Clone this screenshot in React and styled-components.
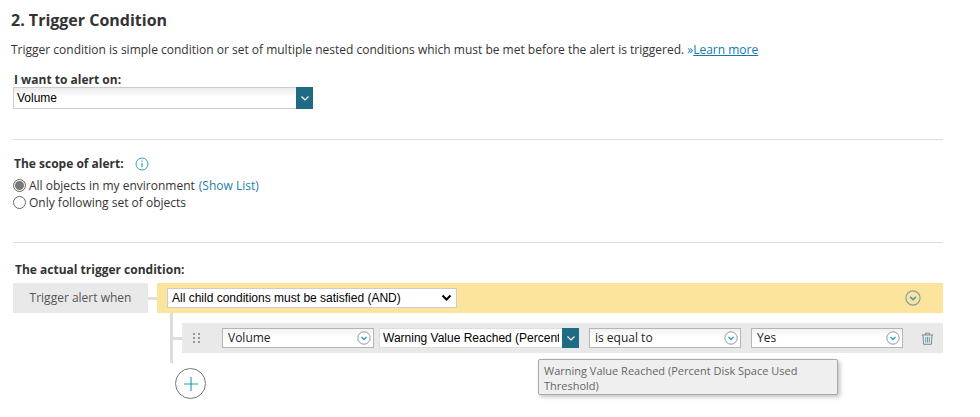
import React from "react";
import styled, { createGlobalStyle } from "styled-components";

const GlobalStyle = createGlobalStyle`
  html, body {
    margin: 0;
    padding: 0;
    background: #fff;
    font-family: "Open Sans", sans-serif;
    color: #333;
  }
`;

const Page = styled.div`
  width: 980px;
  height: 417px;
  box-sizing: border-box;
  padding: 10px 37px 0 13px;
  overflow: hidden;
`;

const Title = styled.h2`
  margin: 0 0 0 -2px;
  font-size: 16px;
  line-height: 20px;
  font-weight: 700;
  color: #333;
`;

const Intro = styled.p`
  margin: 12px 0 14px -2px;
  font-size: 12px;
  line-height: 16px;
  color: #333;
  white-space: nowrap;
  a {
    color: #0f7cab;
    text-decoration: underline;
  }
  span {
    color: #0f7cab;
  }
`;

const Label = styled.div`
  font-size: 12px;
  line-height: 16px;
  font-weight: 700;
  color: #333;
  display: flex;
  align-items: center;
  gap: 11px;
  margin-left: ${(p) => p.$indent || 0}px;
`;

const Section = styled.section`
  border-bottom: ${(p) => (p.$last ? "none" : "1px solid #ddd")};
  height: ${(p) => p.$height}px;
  box-sizing: border-box;
  padding-top: ${(p) => p.$top}px;
`;

const MainSelect = styled.div`
  display: flex;
  width: 300px;
  height: 22px;
  box-sizing: border-box;
  margin-top: -1px;
  border: 1px solid #ccc;
  border-right: none;
  background: linear-gradient(#ececec, #fff 45%);
  font-family: "Liberation Sans", sans-serif;
  font-size: 12px;
  line-height: 20px;
  color: #000;
  span {
    flex: 1;
    padding-left: 3px;
  }
`;

const ArrowBox = styled.div`
  width: 17px;
  background: #1f6b84;
  display: flex;
  align-items: center;
  justify-content: center;
  margin: -1px 0;
`;

const RadioRow = styled.label`
  display: flex;
  align-items: center;
  gap: 3px;
  font-size: 12px;
  line-height: 17px;
  color: #333;
  a {
    color: #1d7ea8;
    margin-left: 4px;
    text-decoration: none;
  }
`;

const RadioList = styled.div`
  margin-top: 5px;
`;

const RadioDot = styled.span`
  width: 13px;
  height: 13px;
  box-sizing: border-box;
  border: 1px solid #666;
  border-radius: 50%;
  background: #fff;
  display: flex;
  align-items: center;
  justify-content: center;
  &::after {
    content: "";
    width: 9px;
    height: 9px;
    border-radius: 50%;
    background: ${(p) => (p.$on ? "#777" : "transparent")};
  }
`;

const TriggerRow = styled.div`
  display: flex;
  margin-top: 5px;
  height: 30px;
`;

const WhenBox = styled.div`
  width: 135px;
  background: #e9e9e9;
  font-size: 12px;
  line-height: 30px;
  color: #555;
  text-align: center;
  margin-right: 9px;
  position: relative;
  &::after {
    content: "";
    position: absolute;
    left: 135px;
    top: 14px;
    width: 9px;
    height: 3px;
    background: #ddd;
  }
`;

const YellowBar = styled.div`
  flex: 1;
  background: #fde49c;
  display: flex;
  align-items: center;
  justify-content: space-between;
  padding: 0 22px 0 10px;
`;

const NativeBox = styled.div`
  width: 290px;
  height: 20px;
  box-sizing: border-box;
  background: #fff;
  border: 1px solid #ccc;
  font-family: "Liberation Sans", sans-serif;
  font-size: 12px;
  line-height: 18px;
  color: #000;
  padding: 0 4px 0 4px;
  display: flex;
  align-items: center;
  justify-content: space-between;
`;

const ChildArea = styled.div`
  margin-left: 157px;
  padding-left: 12px;
  padding-top: 10px;
  position: relative;
  &::before {
    content: "";
    position: absolute;
    left: 0;
    top: 0;
    width: 3px;
    height: 50px;
    background: #ddd;
  }
`;

const ConditionRow = styled.div`
  height: 30px;
  background: #e9e9e9;
  display: flex;
  align-items: center;
  padding-left: 40px;
  gap: 5px;
  position: relative;
  &::before {
    content: "";
    position: absolute;
    left: -9px;
    top: 14px;
    width: 9px;
    height: 3px;
    background: #ddd;
  }
`;

const Grip = styled.div`
  position: absolute;
  left: 11px;
  top: 10px;
  display: grid;
  grid-template-columns: 2px 2px;
  gap: 2px 3px;
  i {
    width: 2px;
    height: 2px;
    background: #999;
  }
`;

const CondSelect = styled.div`
  width: ${(p) => p.$w}px;
  height: 20px;
  box-sizing: border-box;
  border: 1px solid #b5b5b5;
  background: linear-gradient(#f2f2f2, #fff 45%);
  font-family: "Open Sans", sans-serif;
  font-size: 12px;
  line-height: 18px;
  color: #222;
  padding: 0 2px 0 5px;
  margin-left: ${(p) => p.$gap || 0}px;
  display: flex;
  align-items: center;
  justify-content: space-between;
`;

const CondText = styled.div`
  display: flex;
  width: 200px;
  height: 20px;
  box-sizing: border-box;
  background: #fff;
  border: 1px solid #ddd;
  border-right: none;
  font-family: "Liberation Sans", sans-serif;
  font-size: 12px;
  line-height: 18px;
  color: #000;
  span {
    flex: 1;
    min-width: 0;
    margin: 0 3px;
    overflow: hidden;
    white-space: nowrap;
  }
`;

const TrashSlot = styled.div`
  margin-left: 13px;
  display: flex;
`;

const AddButton = styled.div`
  width: 31px;
  height: 31px;
  box-sizing: border-box;
  border: 1px solid #777;
  border-radius: 50%;
  background: #fff;
  margin: 15px 0 0 -7px;
  display: flex;
  align-items: center;
  justify-content: center;
`;

const Tooltip = styled.div`
  position: absolute;
  left: 368px;
  top: 46px;
  width: 300px;
  height: 36px;
  box-sizing: border-box;
  background: #efefef;
  border: 1px solid #aaa;
  border-radius: 2px;
  box-shadow: 2px 2px 4px rgba(0, 0, 0, 0.25);
  font-size: 11px;
  line-height: 15px;
  color: #666;
  padding: 3px 5px;
`;

const Chevron = ({ color = "#fff", size = 10 }) => (
  <svg width={size} height={size} viewBox="0 0 10 10" fill="none">
    <path d="M1.5 3.5L5 7l3.5-3.5" stroke={color} strokeWidth="1.2" />
  </svg>
);

const RoundChevron = ({ size = 14, stroke = "#8c9aa0", fill = "#fff" }) => (
  <svg width={size} height={size} viewBox="0 0 14 14" fill="none">
    <circle cx="7" cy="7" r="6.2" stroke={stroke} strokeWidth="1" fill={fill} />
    <path d="M4.5 6L7 8.5 9.5 6" stroke="#2f9cc4" strokeWidth="1.4" />
  </svg>
);

const InfoIcon = () => (
  <svg width="14" height="14" viewBox="0 0 14 14" fill="none">
    <circle cx="7" cy="7" r="6" stroke="#3c9fcb" strokeWidth="1" />
    <path d="M7 6v4.2" stroke="#3c9fcb" strokeWidth="1.3" />
    <path d="M7 3.5v1.3" stroke="#3c9fcb" strokeWidth="1.3" />
  </svg>
);

const TrashIcon = () => (
  <svg width="13" height="13" viewBox="0 0 13 13" fill="none" stroke="#7f8a8f" strokeWidth="1">
    <path d="M0.8 3h11.4M4.5 3V1.2h4V3" />
    <path d="M2 3l.6 9.3h7.8L11 3" />
    <path d="M4.7 5v5.6M6.5 5v5.6M8.3 5v5.6" stroke="#5f9fb5" />
  </svg>
);

const PlusIcon = () => (
  <svg width="16" height="16" viewBox="0 0 16 16" fill="none">
    <path d="M8 1v14M1 8h14" stroke="#2f9cc4" strokeWidth="1.2" />
  </svg>
);

const NativeArrow = () => (
  <svg width="11" height="8" viewBox="0 0 11 8" fill="none">
    <path d="M1.5 1.5L5.5 5.5 9.5 1.5" stroke="#000" strokeWidth="2" />
  </svg>
);

export default function App() {
  return (
    <Page>
      <GlobalStyle />
      <Section $height={130} $top={0}>
        <Title>2. Trigger Condition</Title>
        <Intro>
          Trigger condition is simple condition or set of multiple nested conditions which must be met
          before the alert is triggered. <span>»</span>
          <a href="#learn">Learn more</a>
        </Intro>
        <Label $indent={1}>I want to alert on:</Label>
        <MainSelect>
          <span>Volume</span>
          <ArrowBox>
            <Chevron />
          </ArrowBox>
        </MainSelect>
      </Section>

      <Section $height={103} $top={16}>
        <Label $indent={1}>
          The scope of alert:
          <InfoIcon />
        </Label>
        <RadioList>
          <RadioRow>
            <RadioDot $on />
            <span>
              All objects in my environment<a href="#list">(Show List)</a>
            </span>
          </RadioRow>
          <RadioRow>
            <RadioDot />
            <span>Only following set of objects</span>
          </RadioRow>
        </RadioList>
      </Section>

      <Section $last $height={170} $top={19}>
        <Label $indent={2}>The actual trigger condition:</Label>
        <TriggerRow>
          <WhenBox>Trigger alert when</WhenBox>
          <YellowBar>
            <NativeBox>
              All child conditions must be satisfied (AND)
              <NativeArrow />
            </NativeBox>
            <RoundChevron size={16} fill="none" />
          </YellowBar>
        </TriggerRow>
        <ChildArea>
          <ConditionRow>
            <Grip>
              <i /><i /><i /><i /><i /><i />
            </Grip>
            <CondSelect $w={152}>
              Volume
              <RoundChevron />
            </CondSelect>
            <CondText>
              <span>Warning Value Reached (Percent Disk Space Used Threshold)</span>
              <ArrowBox>
                <Chevron />
              </ArrowBox>
            </CondText>
            <CondSelect $w={152} $gap={5}>
              is equal to
              <RoundChevron />
            </CondSelect>
            <CondSelect $w={152} $gap={5}>
              Yes
              <RoundChevron />
            </CondSelect>
            <TrashSlot>
              <TrashIcon />
            </TrashSlot>
          </ConditionRow>
          <AddButton>
            <PlusIcon />
          </AddButton>
          <Tooltip>Warning Value Reached (Percent Disk Space Used Threshold)</Tooltip>
        </ChildArea>
      </Section>
    </Page>
  );
}
